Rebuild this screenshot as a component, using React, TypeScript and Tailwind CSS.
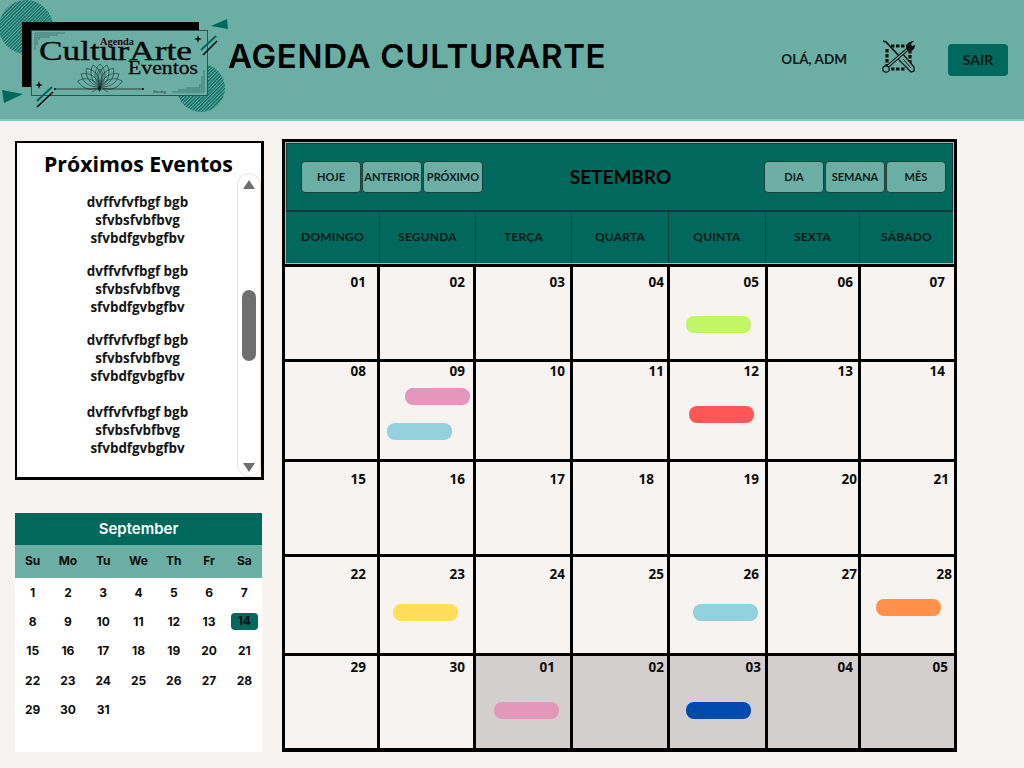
const lato = "font-['Lato','Noto_Sans',sans-serif]";

type Pill = { color: string; pos: string };
type Cell = { n: string; pr: string; gray?: boolean; pills?: Pill[] };

const rows: { pt: string; cells: Cell[] }[] = [
  {
    pt: "pt-[6px]",
    cells: [
      { n: "01", pr: "pr-[11px]" },
      { n: "02", pr: "pr-[8px]" },
      { n: "03", pr: "pr-[5px]" },
      { n: "04", pr: "pr-[3px]" },
      { n: "05", pr: "pr-[6px]", pills: [{ color: "bg-[#c1f666]", pos: "mt-[25px] ml-[16px]" }] },
      { n: "06", pr: "pr-[5px]" },
      { n: "07", pr: "pr-[9px]" },
    ],
  },
  {
    pt: "pt-0",
    cells: [
      { n: "08", pr: "pr-[11px]" },
      {
        n: "09",
        pr: "pr-[8px]",
        pills: [
          { color: "bg-[#e297bb]", pos: "mt-[8px] ml-[25px]" },
          { color: "bg-[#92d1dd]", pos: "mt-[18px] ml-[7px]" },
        ],
      },
      { n: "10", pr: "pr-[5px]" },
      { n: "11", pr: "pr-[3px]" },
      { n: "12", pr: "pr-[6px]", pills: [{ color: "bg-[#ff5757]", pos: "mt-[26px] ml-[19px]" }] },
      { n: "13", pr: "pr-[5px]" },
      { n: "14", pr: "pr-[9px]" },
    ],
  },
  {
    pt: "pt-[8px]",
    cells: [
      { n: "15", pr: "pr-[11px]" },
      { n: "16", pr: "pr-[8px]" },
      { n: "17", pr: "pr-[5px]" },
      { n: "18", pr: "pr-[13px]" },
      { n: "19", pr: "pr-[6px]" },
      { n: "20", pr: "pr-px" },
      { n: "21", pr: "pr-[5px]" },
    ],
  },
  {
    pt: "pt-[8px]",
    cells: [
      { n: "22", pr: "pr-[11px]" },
      { n: "23", pr: "pr-[8px]", pills: [{ color: "bg-[#ffde59]", pos: "mt-[21px] ml-[13px]" }] },
      { n: "24", pr: "pr-[5px]" },
      { n: "25", pr: "pr-[3px]" },
      { n: "26", pr: "pr-[6px]", pills: [{ color: "bg-[#92d1dd]", pos: "mt-[21px] ml-[23px]" }] },
      { n: "27", pr: "pr-px" },
      { n: "28", pr: "pr-[2px]", pills: [{ color: "bg-[#ff914d]", pos: "mt-[16px] ml-[15px]" }] },
    ],
  },
  {
    pt: "pt-[2px]",
    cells: [
      { n: "29", pr: "pr-[11px]" },
      { n: "30", pr: "pr-[8px]" },
      { n: "01", pr: "pr-[15px]", gray: true, pills: [{ color: "bg-[#e297bb]", pos: "mt-[26px] ml-[18px]" }] },
      { n: "02", pr: "pr-[3px]", gray: true },
      { n: "03", pr: "pr-[4px]", gray: true, pills: [{ color: "bg-[#004aad]", pos: "mt-[26px] ml-[16px]" }] },
      { n: "04", pr: "pr-[5px]", gray: true },
      { n: "05", pr: "pr-[6px]", gray: true },
    ],
  },
];

const weekdays = ["DOMINGO", "SEGUNDA", "TERÇA", "QUARTA", "QUINTA", "SEXTA", "SÁBADO"];
const miniHead = ["Su", "Mo", "Tu", "We", "Th", "Fr", "Sa"];
const miniDays = Array.from({ length: 31 }, (_, i) => i + 1);

const events = [
  { l: ["dvffvfvfbgf bgb", "sfvbsfvbfbvg", "sfvbdfgvbgfbv"], cls: "mb-[15px]" },
  { l: ["dvffvfvfbgf bgb", "sfvbsfvbfbvg", "sfvbdfgvbgfbv"], cls: "mb-[15px]" },
  { l: ["dvffvfvfbgf bgb", "sfvbsfvbfbvg", "sfvbdfgvbgfbv"], cls: "mb-[18px]" },
  { l: ["dvffvfvfbgf bgb", "sfvbsfvbfbvg", "sfvbdfgvbgfbv"], cls: "" },
];

const lotusAngles = [-75, -55, -36, -18, 0, 18, 36, 55, 75];

function Logo() {
  const teal = "#01685e";
  return (
    <svg width="228" height="119" viewBox="0 0 228 119" className="shrink-0">
      <defs>
        <pattern id="st" width="2.4" height="2.4" patternUnits="userSpaceOnUse" patternTransform="rotate(45)">
          <rect width="2.4" height="2.4" fill="#6aaea4" />
          <rect width="1.3" height="2.4" fill={teal} />
        </pattern>
      </defs>
      <circle cx="26" cy="27" r="27" fill="url(#st)" />
      <circle cx="201" cy="88" r="24" fill="url(#st)" />
      <path d="M211 26 L227 19 L228 29 Z" fill={teal} />
      <path d="M2 90 L23 94 L4 103 Z" fill={teal} />
      <rect x="22" y="22" width="177" height="65" fill="#000" />
      <rect x="31.5" y="30.5" width="176" height="65" fill="#6aaea4" stroke="#23574f" strokeWidth="1" />
      <path d="M201 50 L216 36" stroke={teal} strokeWidth="2" />
      <path d="M203 55 L217 41" stroke="#000" strokeWidth="1.5" />
      <path d="M37 101 L52 87" stroke={teal} strokeWidth="2" />
      <path d="M37 107 L53 92" stroke="#000" strokeWidth="1.5" />
      <g fill="none" stroke="#23574f" strokeWidth="0.6">
        <path d="M35 50 V33 H65 M37 45 V35 H58 M39 40 V37 H50" />
        <path d="M204 70 V92 H172 M202 76 V90 H178 M200 84 V88 H186" />
      </g>
      <g stroke="#14302c" fill="none" strokeWidth="0.55">
        {lotusAngles.map((a) => (
          <path key={a} d="M100 87 C93 78 94 70 100 64 C106 70 107 78 100 87" transform={`rotate(${a} 100 87)`} />
        ))}
        <path d="M100 85 C96 78 96 72 100 69 C104 72 104 78 100 85" />
        <path d="M92 92 C96 90 98 88 100 87 C102 88 104 90 108 92" />
      </g>
      <path d="M55 89 H143" stroke="#111" strokeWidth="0.7" />
      <circle cx="55" cy="89" r="1" fill="#111" />
      <circle cx="143" cy="89" r="1" fill="#111" />
      <path d="M99.5 86 L101 89 L99.5 92 L98 89 Z" fill="#111" />
      <path d="M198 35 L199 38 L202 39 L199 40 L198 43 L197 40 L194 39 L197 38 Z" fill="#111" />
      <path d="M39 81 L40 84 L43 85 L40 86 L39 89 L38 86 L35 85 L38 84 Z" fill="#111" />
      <text x="100" y="45" fill="#0a0a0a" fontFamily="'Liberation Serif',serif" fontWeight="700" fontSize="10" textLength="34" lengthAdjust="spacingAndGlyphs">
        Agenda
      </text>
      <text x="39" y="60" fill="#0a0a0a" fontFamily="'Liberation Serif',serif" fontWeight="400" stroke="#0a0a0a" strokeWidth="0.4" fontSize="27" textLength="153" lengthAdjust="spacingAndGlyphs">
        CulturArte
      </text>
      <text x="128" y="74" fill="#0a0a0a" fontFamily="'Liberation Serif',serif" fontWeight="400" stroke="#0a0a0a" strokeWidth="0.3" fontSize="18" textLength="70" lengthAdjust="spacingAndGlyphs">
        Eventos
      </text>
      <text x="153" y="93" fill="#1a2b28" fontFamily="'Liberation Serif',serif" fontStyle="italic" fontSize="5" textLength="13">
        Strong
      </text>
    </svg>
  );
}

function ToolsIcon() {
  return (
    <svg width="34" height="34" viewBox="0 0 34 34" className="shrink-0">
      <path d="M5 9 V26 M9 6 H25 M28 10 V25 M9 29 H24" fill="none" stroke="#111" strokeWidth="3.2" strokeDasharray="3.5 1.5" />
      <path d="M1 1 L4 2 L19 18" stroke="#111" strokeWidth="1.8" fill="none" />
      <path d="M18 16 L21 14 L32 27 L32 31 L29 32 L16 19 Z" fill="#6aaea4" stroke="#111" strokeWidth="1.3" />
      <path d="M21 19 L29 28" stroke="#111" strokeWidth="1" />
      <path d="M27 8 L5 27" stroke="#111" strokeWidth="3.4" />
      <path d="M27 8 L5 27" stroke="#6aaea4" strokeWidth="1.2" />
      <path d="M24 9 C24 3 28 1 32 1 L29 4 L30 6 L33 5 C33 9 30 12 26 11 Z" fill="#111" />
      <circle cx="4" cy="29" r="3.2" fill="#6aaea4" stroke="#111" strokeWidth="1.2" />
    </svg>
  );
}

function Btn({ t }: { t: string }) {
  return (
    <div className={`flex h-[32px] w-[60px] items-center justify-center rounded-[4px] border border-[#1f3f3b] bg-[#6aaea4] text-[11px] font-bold text-[#0a1a18] ${lato}`}>
      {t}
    </div>
  );
}

export default function App() {
  return (
    <div className="h-[768px] w-[1024px] overflow-hidden bg-[#f7f3f0]">
      <header className="flex h-[121px] items-center border-b-2 border-[#8fc4bb] bg-[#6aaea4]">
        <Logo />
        <h1 className="mb-[6px] flex-1 font-['Inter',sans-serif] text-[33px] leading-none font-semibold tracking-[0.7px] text-black">
          AGENDA CULTURARTE
        </h1>
        <span className={`text-[13.5px] font-bold text-[#0a1a18] ${lato}`}>OLÁ, ADM</span>
        <div className="mb-[6px] ml-[35px]">
          <ToolsIcon />
        </div>
        <div className={`ml-[32px] mr-[16px] flex h-[32px] w-[60px] items-center justify-center rounded-[4px] bg-[#01685e] text-[14px] font-bold text-[#0a1a18] ${lato}`}>
          SAIR
        </div>
      </header>

      <main className="flex items-start pt-[18px] pl-[15px]">
        <aside className="w-[249px] shrink-0 pt-[2px]">
          <section className="relative flex h-[339px] flex-col border-2 border-r-[3px] border-b-[3px] border-black bg-white font-['Open_Sans',sans-serif] text-black">
            <h2 className="pt-[6px] pl-[27px] text-left text-[21.3px] leading-[30px] font-bold whitespace-nowrap">Próximos Eventos</h2>
            <div className="mt-[14px] pr-[3px] text-center text-[13.4px] leading-[18px] font-bold text-[#151515]">
              {events.map((e, i) => (
                <div key={i} className={e.cls}>
                  {e.l.map((x) => (
                    <div key={x}>{x}</div>
                  ))}
                </div>
              ))}
            </div>
            <div className="absolute top-[30px] right-0 bottom-0 flex w-[24px] flex-col items-center rounded-[12px] border border-[#e4e4e4] bg-white pt-[6px]">
              <div className="h-0 w-0 border-x-[6px] border-b-[9px] border-x-transparent border-b-[#6f6f6f]" />
              <div className="mt-[101px] h-[71px] w-[14px] rounded-[7px] bg-[#6f6f6f]" />
              <div className="mt-[102px] h-0 w-0 border-x-[6px] border-t-[9px] border-x-transparent border-t-[#6f6f6f]" />
            </div>
          </section>

          <section className="mt-[33px] h-[239px] w-[247px] bg-white font-['Inter',sans-serif]">
            <div className="flex h-[32px] items-center justify-center bg-[#01685e] text-[15px] font-semibold text-white">September</div>
            <div className="grid h-[33px] grid-cols-7 items-center bg-[#6aaea4] pb-px text-center text-[12px] font-bold text-[#0c0c0c]">
              {miniHead.map((d) => (
                <div key={d}>{d}</div>
              ))}
            </div>
            <div className="grid grid-cols-7 text-center text-[12px] font-bold text-[#0c0c0c]">
              {miniDays.map((d) => (
                <div key={d} className="flex h-[29.3px] items-center justify-center">
                  {d === 14 ? (
                    <span className="mb-px h-[17px] w-[27px] rounded-[4px] bg-[#01685e] text-center leading-[15px]">14</span>
                  ) : (
                    d
                  )}
                </div>
              ))}
            </div>
          </section>
        </aside>

        <section className="ml-[18px] h-[613px] w-[675px] shrink-0 border-[3px] border-black bg-black">
          <div className="border-[1px] border-b-[1.5px] border-[#b5b5b5] bg-[#123c38]">
            <div className="flex h-[67px] items-center border-x border-t border-[#123c38] bg-[#01685e] pr-[6px] pl-[14px]">
              <div className="flex gap-px">
                <Btn t="HOJE" />
                <Btn t="ANTERIOR" />
                <Btn t="PRÓXIMO" />
              </div>
              <div className={`flex-1 pr-[6px] text-center text-[19px] font-bold text-black ${lato}`}>SETEMBRO</div>
              <div className="flex gap-px">
                <Btn t="DIA" />
                <Btn t="SEMANA" />
                <Btn t="MÊS" />
              </div>
            </div>
            <div className="mt-[2px] grid h-[51px] grid-cols-[93px_95px_95px_96px_96px_93px_1fr] gap-px">
              {weekdays.map((d) => (
                <div key={d} className={`flex items-center justify-center bg-[#01685e] pb-[2px] text-[12px] font-bold tracking-[0.2px] text-[#0a1a18] ${lato}`}>
                  {d}
                </div>
              ))}
            </div>
          </div>
          <div className="mt-[3px] grid grid-cols-[92px_93px_94px_94px_95px_90px_93px] grid-rows-[92px_97px_92px_96px_92px] gap-[3px]">
            {rows.flatMap((r, ri) =>
              r.cells.map((c, ci) => (
                <div key={`${ri}-${ci}`} className={`${c.gray ? "bg-[#d4cfcf]" : "bg-[#f7f3f0]"} ${r.pt} font-['Open_Sans',sans-serif]`}>
                  <div className={`text-right text-[13.5px] leading-[18px] font-bold text-[#0c0c0c] ${c.pr}`}>{c.n}</div>
                  {c.pills?.map((p, i) => (
                    <div key={i} className={`h-[17px] w-[65px] rounded-[8px] ${p.color} ${p.pos}`} />
                  ))}
                </div>
              )),
            )}
          </div>
        </section>
      </main>
    </div>
  );
}
